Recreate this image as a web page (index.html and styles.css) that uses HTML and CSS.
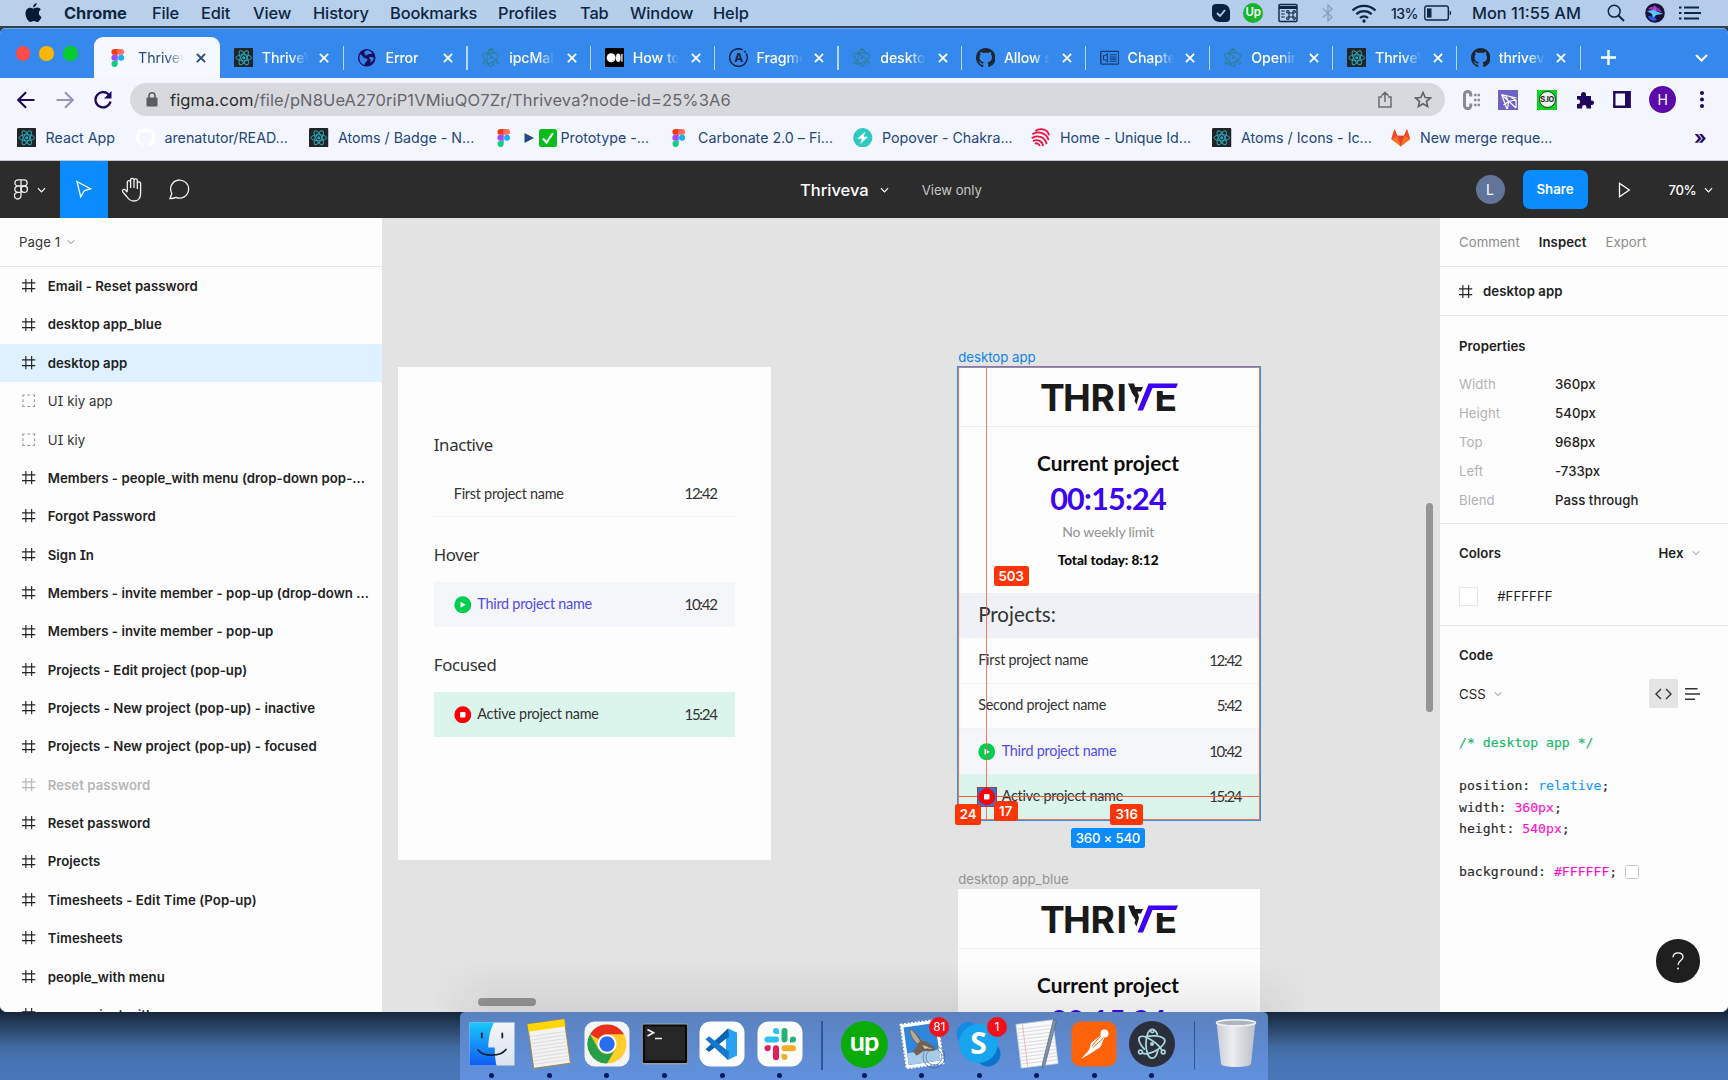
FILE: index.html
```html
<!DOCTYPE html>
<html lang="en">
<head>
<meta charset="utf-8">
<title>Thriveva</title>
<link rel="stylesheet" href="styles.css">
</head>
<body>
<svg class="sprite" aria-hidden="true">
  <symbol id="react" viewBox="0 0 20 20"><rect width="20" height="20" rx="1.5" fill="#222426"/><g fill="none" stroke="#27a9bd" stroke-width="1"><ellipse cx="10" cy="10" rx="8" ry="3.1"/><ellipse cx="10" cy="10" rx="8" ry="3.1" transform="rotate(60 10 10)"/><ellipse cx="10" cy="10" rx="8" ry="3.1" transform="rotate(120 10 10)"/></g><circle cx="10" cy="10" r="1.6" fill="#27a9bd"/></symbol>
  <symbol id="figma" viewBox="0 0 20 20"><path d="M6.5 1H10v6H6.5a3 3 0 0 1 0-6z" fill="#f63c0a"/><path d="M10 1h3.5a3 3 0 0 1 0 6H10z" fill="#ff6d60"/><path d="M6.5 7H10v6H6.5a3 3 0 0 1 0-6z" fill="#9c4bff"/><circle cx="13.4" cy="10" r="3.1" fill="#12b2f8"/><path d="M6.5 13H10v3.2A3.2 3.2 0 1 1 6.5 13z" fill="#10cf82"/></symbol>
  <symbol id="electron" viewBox="0 0 20 20"><g fill="none" stroke="currentColor" stroke-width="1.1" stroke-linecap="round"><path d="M5.2 13.2C2 9.8.9 6.500 2.500 5.500c1.300-.8 4.300.2 7.300 2.100 3.100 2 5.500 4.400 6.400 6.500"/><path d="M6.300 5.400c4.200-.9 9-.6 11 1.100 1.900 1.700-.2 4.700-3.900 7.100-3.700 2.300-7.800 3.200-9.300 2"/><path d="M13.300 4c-.7-2-1.900-3.100-3.200-3.100C7.800.9 6.200 5 6.200 10c0 5 1.700 8.900 3.900 8.900 1.500 0 2.800-1.800 3.500-4.600"/></g><g fill="none" stroke="currentColor"><circle cx="2.800" cy="15" r="1.200"/><circle cx="17" cy="15" r="1.200"/><circle cx="10.200" cy="1.900" r="1"/></g><circle cx="10" cy="10" r="1.200" fill="currentColor"/></symbol>
  <symbol id="github" viewBox="0 0 16 16"><path fill="currentColor" d="M8 0C3.58 0 0 3.58 0 8c0 3.540 2.290 6.530 5.470 7.590.4.070.55-.17.55-.38 0-.19-.01-.82-.01-1.490-2.010.37-2.530-.49-2.690-.94-.09-.23-.48-.94-.82-1.130-.28-.15-.68-.52-.01-.53.63-.01 1.080.58 1.230.82.72 1.210 1.870.87 2.330.66.070-.52.28-.87.51-1.070-1.780-.2-3.640-.89-3.640-3.950 0-.87.31-1.590.82-2.150-.08-.2-.36-1.020.08-2.120 0 0 .67-.21 2.200.82.640-.18 1.320-.27 2-.27s1.360.09 2 .27c1.530-1.040 2.200-.82 2.200-.82.440 1.100.16 1.920.08 2.120.51.560.82 1.270.82 2.150 0 3.070-1.870 3.750-3.650 3.950.29.250.54.730.54 1.480 0 1.070-.01 1.930-.01 2.200 0 .21.15.460.55.38A8.010 8.010 0 0 0 16 8c0-4.420-3.580-8-8-8z"/></symbol>
  <symbol id="globe" viewBox="0 0 20 20"><circle cx="10" cy="10" r="9" fill="#1c0d5c"/><path d="M3 6.500C6 7.500 6 10 8.500 10.500s3 1.500 1.500 3-2.500 3-2.500 4C4 16.500 2.500 13 2.500 10zM8.500 3c2.500-1.500 5 0 7 2-1 2-2.500.5-4 1.500S9 8.500 8.500 7s-2-2.500 0-4zM12.500 9.500c1.500-.5 4-.5 4.800.5-.3 2.500-1.800 4-3.300 5-.5-1.500.5-2.500-.5-3.500s-1.500-1.500-1-2z" fill="#2f83ea"/></symbol>
  <symbol id="medium" viewBox="0 0 20 20"><rect width="20" height="20" rx="1.500"/><circle cx="6.300" cy="10" r="4.600" fill="#fff"/><ellipse cx="13.600" cy="10" rx="2.400" ry="4.400" fill="#fff"/><rect x="16.700" y="6" width="1.300" height="8" fill="#fff"/></symbol>
  <symbol id="apollo" viewBox="0 0 20 20"><path d="M17.600 5.500A9 9 0 1 1 14 1.900" fill="none" stroke="#16223d" stroke-width="1.500"/><circle cx="16.300" cy="3.800" r="1" fill="#16223d"/><text x="10" y="14.500" text-anchor="middle" font-family="Inter, sans-serif" font-weight="700" font-size="12.500" fill="#16223d">A</text></symbol>
  <symbol id="chapter" viewBox="0 0 20 20"><rect x=".8" y="3.500" width="18.400" height="13" rx="1" fill="none" stroke="#123a78" stroke-width="1.400"/><path d="M3.500 8v4h1.500l2.500 2V6L5 8zM10 7h7M10 9.200h7M10 11.400h7M10 13.600h7" fill="none" stroke="#123a78" stroke-width="1.100"/></symbol>
  <symbol id="close" viewBox="0 0 10 10"><path d="M.9.900l8.200 8.200M9.100.900L.9 9.100" fill="none" stroke="currentColor" stroke-width="1.900"/></symbol>
  <symbol id="chev" viewBox="0 0 10 6"><path d="M1 1l4 4 4-4" fill="none" stroke="currentColor" stroke-width="1.300"/></symbol>
  <symbol id="frame" viewBox="0 0 14 14"><path d="M4 0v14M10 0v14M0 4h14M0 10h14" fill="none" stroke="currentColor" stroke-width="1.200"/></symbol>
  <symbol id="group" viewBox="0 0 14 14"><path d="M1 3V1h2M5.500 1h3M11 1h2v2M13 5.500v3M13 11v2h-2M8.500 13h-3M3 13H1v-2M1 8.500v-3" fill="none" stroke="#9a9a9a" stroke-width="1.200"/></symbol>
  <symbol id="play" viewBox="0 0 18 18"><circle cx="9" cy="9" r="8.700" fill="#00ce51"/><path d="M6.700 5.800l5.500 3.200-5.500 3.200z" fill="#fff"/></symbol>
  <symbol id="stop" viewBox="0 0 18 18"><circle cx="9" cy="9" r="8.700" fill="#fb0207"/><rect x="6.200" y="6.200" width="5.600" height="5.600" rx=".8" fill="#fff"/></symbol>
  <symbol id="thrive" viewBox="0 0 137 28">
    <g font-family="Inter, sans-serif" font-weight="700" font-size="37.200" fill="#1a1a1a"><text x="-1" y="27.500">T</text><text x="22" y="27.500">H</text><text x="49.500" y="27.500">R</text><text x="75.500" y="27.500">I</text><text x="113.500" y="27.500">E</text></g>
    <path d="M106 -2h31v10.500h-31z" fill="#fdfdfd"/>
    <path d="M87 .5h6l1 3.500h8l-2 4.500h-3.500l1.500 4.500-2.500 8.500-2-3.500 1-3-3.500-5z" fill="#1a1a1a"/>
    <path d="M107.500.5h29.500L135 5h-23.500L102 27.500h-5.500z" fill="#3d00f5"/>
    <path d="M116.200 8h5.300v4.500h-5.300z" fill="#1a1a1a"/>
  </symbol>
</svg>

<header class="menubar">
  <nav class="menus">
    <span class="apple"><svg width="17" height="20" viewBox="0 0 17 20"><path d="M11.600 0c.2 1.900-1.500 4.300-3.500 4.300C7.900 2.400 9.700.3 11.600 0zM8.600 5.600c.8 0 1.900-1 3.600-1 1.500 0 2.900.8 3.700 2-3 1.800-2.600 6 .6 7.300-.8 2.200-2.500 5-4.200 5-1.300 0-1.800-.9-3.400-.9s-2.200.9-3.400.9C3.300 18.900.5 14.400.5 10.500c0-3.700 2.300-5.800 4.700-5.800 1.500 0 2.600.9 3.400.9z" fill="#041a35"/></svg></span>
    <b>Chrome</b><span>File</span><span>Edit</span><span>View</span><span>History</span><span>Bookmarks</span><span>Profiles</span><span>Tab</span><span>Window</span><span>Help</span>
  </nav>
  <div class="status">
    <svg width="20" height="20" viewBox="0 0 20 20"><path d="M5 1h7a8 8 0 0 1 7 7v7a4 4 0 0 1-4 4H8a8 8 0 0 1-7-7V5a4 4 0 0 1 4-4z" fill="#08213e"/><path d="M6 10l3 3 5-6" fill="none" stroke="#b5ceea" stroke-width="1.800"/></svg>
    <span class="up">Up</span>
    <svg width="20" height="20" viewBox="0 0 20 20"><rect x="1" y="1.500" width="18" height="17" rx="1" fill="none" stroke="#0b2746" stroke-width="1.400"/><path d="M1 4.500h18" stroke="#0b2746" stroke-width="3"/><path d="M3.500 8h3M3.500 11h3M3.500 14h3" stroke="#0b2746" stroke-width="1.500" stroke-dasharray="1.300 .6"/><path d="M11 10h4v4h-4zM11 10H9.800A1.200 1.200 0 1 1 11 8.800zM15 10V8.800A1.200 1.200 0 1 1 16.200 10zM15 14h1.200A1.200 1.200 0 1 1 15 15.200zM11 14v1.200A1.200 1.200 0 1 1 9.800 14z" fill="none" stroke="#0b2746" stroke-width="1.100"/></svg>
    <svg class="bt" width="12" height="20" viewBox="0 0 12 20"><path d="M1 5.500l9 8.500-4 4V2l4 4-9 8.500" fill="none" stroke="#86a3c5" stroke-width="1.400"/></svg>
    <svg class="wifi" width="26" height="19" viewBox="0 0 26 19"><g fill="none" stroke="#0b2746" stroke-width="2.300"><path d="M1.500 6.500a16.500 16.500 0 0 1 23 0M5.300 10.300a11 11 0 0 1 15.400 0M9 14a6 6 0 0 1 8 0"/></g><circle cx="13" cy="17" r="1.700" fill="#0b2746"/></svg>
    <span class="pct">13%</span>
    <svg class="batt" width="28" height="16" viewBox="0 0 28 16"><rect x=".8" y="1" width="23.500" height="14" rx="2" fill="none" stroke="#0b2746" stroke-width="1.400"/><rect x="3" y="3.400" width="4.500" height="9.200" fill="#0b2746"/><path d="M25.600 5.500c2 .7 2 4.300 0 5z" fill="#0b2746"/></svg>
    <span class="clock">Mon 11:55 AM</span>
    <svg class="find" width="18" height="18" viewBox="0 0 18 18"><circle cx="7.200" cy="7.200" r="5.900" fill="none" stroke="#0b2746" stroke-width="1.500"/><path d="M11.500 11.500l5.500 5.500" stroke="#0b2746" stroke-width="2"/></svg>
    <svg class="siri" width="20" height="20" viewBox="0 0 20 20"><circle cx="10" cy="10" r="9.800" fill="#171239"/><path d="M10 2l1 6 7 3-7 1-3 4-1-5-5-3 6-1z" fill="#53c9f5"/><path d="M3 6c5-5 12-2 14 4-4-3-9-2-14-4z" fill="#c233d8" opacity=".8"/><path d="M3 13c4 0 7 1 9 4-4 2-8 0-9-4z" fill="#3157e8"/></svg>
    <svg width="22" height="14" viewBox="0 0 22 14"><path d="M5 1.500h15M5 7h17M5 12.500h15M0 1.500h2.500M0 7h2.500M0 12.500h2.500" stroke="#0b2746" stroke-width="2.200"/></svg>
  </div>
</header>

<main class="window">
  <div class="tabstrip">
    <div class="lights"><i class="red"></i><i class="amber"></i><i class="green"></i></div>
    <div class="tabs">
      <div class="tab active"><svg class="fav"><use href="#figma"/></svg><span>Thriveva</span><svg class="x"><use href="#close"/></svg></div>
      <div class="tab"><svg class="fav"><use href="#react"/></svg><span>ThriveVa</span><svg class="x"><use href="#close"/></svg></div>
      <div class="tab"><svg class="fav"><use href="#globe"/></svg><span>Error</span><svg class="x"><use href="#close"/></svg></div>
      <div class="tab"><svg class="fav teal"><use href="#electron"/></svg><span>ipcMain</span><svg class="x"><use href="#close"/></svg></div>
      <div class="tab"><svg class="fav"><use href="#medium"/></svg><span>How to c</span><svg class="x"><use href="#close"/></svg></div>
      <div class="tab"><svg class="fav"><use href="#apollo"/></svg><span>Fragments</span><svg class="x"><use href="#close"/></svg></div>
      <div class="tab"><svg class="fav teal"><use href="#electron"/></svg><span>desktopC</span><svg class="x"><use href="#close"/></svg></div>
      <div class="tab"><svg class="fav dark"><use href="#github"/></svg><span>Allow se</span><svg class="x"><use href="#close"/></svg></div>
      <div class="tab"><svg class="fav"><use href="#chapter"/></svg><span>Chapter</span><svg class="x"><use href="#close"/></svg></div>
      <div class="tab"><svg class="fav teal"><use href="#electron"/></svg><span>Opening</span><svg class="x"><use href="#close"/></svg></div>
      <div class="tab"><svg class="fav"><use href="#react"/></svg><span>ThriveVa</span><svg class="x"><use href="#close"/></svg></div>
      <div class="tab"><svg class="fav dark"><use href="#github"/></svg><span>thriveva</span><svg class="x"><use href="#close"/></svg></div>
    </div>
    <svg class="newtab" width="15" height="15" viewBox="0 0 15 15"><path d="M7.500 0v15M0 7.500h15" stroke="#fff" stroke-width="2.400"/></svg>
    <svg class="tabmenu" width="13" height="8" viewBox="0 0 13 8"><path d="M1 1l5.500 5.500L12 1" fill="none" stroke="#fff" stroke-width="2"/></svg>
  </div>

  <div class="toolbar">
    <svg width="18" height="18" viewBox="0 0 18 18"><path d="M17.500 9H1.800M9 1.200L1.200 9 9 16.800" fill="none" stroke="#21085c" stroke-width="2.200"/></svg>
    <svg width="18" height="18" viewBox="0 0 18 18"><path d="M.5 9h15.700M9 1.200L16.800 9 9 16.800" fill="none" stroke="#9c92bb" stroke-width="2.200"/></svg>
    <svg width="18" height="18" viewBox="0 0 18 18"><path d="M15.300 4.300A7.600 7.600 0 1 0 16.500 10.500" fill="none" stroke="#21085c" stroke-width="2.300"/><path d="M17.500 0v7.500H10z" fill="#21085c"/></svg>
    <div class="address">
      <svg width="12" height="15" viewBox="0 0 12 15"><rect x=".5" y="5.500" width="11" height="9" rx="1" fill="#5a5c61"/><path d="M3 6V3.800a3 3 0 0 1 6 0V6" fill="none" stroke="#5a5c61" stroke-width="1.600"/></svg>
      <span class="url"><em>figma.com</em>/file/pN8UeA270riP1VMiuQO7Zr/Thriveva?node-id=25%3A6</span>
      <svg width="14" height="17" viewBox="0 0 14 17"><path d="M4 6H1v10h12V6h-3M7 11V1.500M3.500 4.800L7 1.300l3.500 3.500" fill="none" stroke="#6a6b70" stroke-width="1.500"/></svg>
      <svg width="18" height="17" viewBox="0 0 18 17"><path d="M9 1.500l2.200 5 5.300.4-4 3.500 1.200 5.200L9 12.800l-4.700 2.800 1.200-5.200-4-3.500 5.300-.4z" fill="none" stroke="#5f6066" stroke-width="1.600"/></svg>
    </div>
    <div class="exts">
      <svg width="18" height="20" viewBox="0 0 18 20"><path d="M8.800 6.500V4.600a3 3 0 0 0-6.300 0v10.800a3 3 0 0 0 6.300 0v-1.900" fill="none" stroke="#8b8b8d" stroke-width="3"/><path d="M12 5h2.500M15.500 5H18M12 10h2.500M15.500 10H18M12 15h2.500M15.500 15H18" stroke="#8f8f91" stroke-width="2.500"/></svg>
      <svg width="20" height="20" viewBox="0 0 20 20"><rect width="20" height="20" fill="#6c63c4"/><path d="M3.500 4.500l15 3.500M3.500 4.500L18 18M3.500 4.500L9 19M8 6.200L10.500 11.500M12.500 7l5 3-7 1.500L5.500 15M18 10v8M10.500 11.500l-1 7.500" fill="none" stroke="#fff" stroke-width="1.200"/></svg>
      <span class="sio"><b>S.IO</b></span>
      <svg width="18" height="18" viewBox="0 0 18 18"><path d="M1 5h4V3.500a2.500 2.500 0 0 1 5 0V5h5v4.500h.8a2.200 2.200 0 0 1 0 4.400H15V17.500h-4.500v-1.300a2.200 2.200 0 0 0-4.400 0v1.300H1V13h1a2.200 2.200 0 0 0 0-4.400H1z" fill="#21085c"/></svg>
      <svg width="18" height="17" viewBox="0 0 18 17"><path d="M1.300 1.300h15.400v14.400H1.300z" fill="none" stroke="#21085c" stroke-width="2.400"/><path d="M12 1h5v15h-5z" fill="#21085c"/></svg>
      <span class="profile">H</span>
      <svg width="4" height="17" viewBox="0 0 4 17"><g fill="#21085c"><circle cx="2" cy="2" r="2"/><circle cx="2" cy="8.500" r="2"/><circle cx="2" cy="15" r="2"/></g></svg>
    </div>
  </div>

  <div class="bookmarks">
    <span><svg class="fav"><use href="#react"/></svg>React App</span>
    <span><svg class="fav white"><use href="#github"/></svg>arenatutor/READ...</span>
    <span><svg class="fav"><use href="#react"/></svg>Atoms / Badge - N...</span>
    <span class="proto"><svg class="fav"><use href="#figma"/></svg><svg class="tri" width="10" height="10" viewBox="0 0 10 10"><path d="M.5 0L10 5 .5 10z" fill="#24487b"/></svg><svg class="check" width="18" height="18" viewBox="0 0 18 18"><rect width="18" height="18" rx="2.500" fill="#09bd1d"/><path d="M4 9.500l3.500 4L14 4" fill="none" stroke="#fff" stroke-width="2"/></svg>Prototype -...</span>
    <span><svg class="fav"><use href="#figma"/></svg>Carbonate 2.0 – Fi...</span>
    <span><svg class="fav" viewBox="0 0 20 20"><circle cx="10" cy="10" r="9.900" fill="#2ec9c1"/><path d="M12.500 3.500L4.500 11h4.500l-1.500 5.500L15.500 9H11z" fill="#fff"/></svg>Popover - Chakra...</span>
    <span><svg class="fav" viewBox="0 0 20 20"><g fill="none" stroke="#ec1440" stroke-width="1.900"><path d="M4.500 3C9-.5 17 1 18.500 7.500M1.500 6.500C7 2.500 16.500 5 18 12.500M.8 10.500C6 6.500 14.500 9 16 16.500M2 13.500c4-2.500 9.500-.5 10.500 5M4 16c2-1 4.500.5 5 2.500"/></g></svg>Home - Unique Id...</span>
    <span><svg class="fav"><use href="#react"/></svg>Atoms / Icons - Ic...</span>
    <span><svg class="fav" viewBox="0 0 20 20"><path d="M10 19L.3 11.500 3.600 1l3 7h6.800l3-7 3.300 10.500z" fill="#fc6d26"/><path d="M10 19L6.600 8h6.800z" fill="#e2432a"/><path d="M.3 11.500L3.600 1l3 7zM19.700 11.500L16.400 1l-3 7z" fill="#ee4a27"/></svg>New merge reque...</span>
    <b>»</b>
  </div>

  <div class="figbar">
    <div class="tool logo"><svg width="14" height="21" viewBox="0 0 14 21"><g fill="none" stroke="#f0f0f0" stroke-width="1.300"><path d="M7 .8H4a3 3 0 0 0 0 6.200h3zM7 .8h3a3 3 0 0 1 0 6.200H7zM7 7H4a3.200 3.200 0 0 0 0 6.400h3zM4 13.400a3.300 3.300 0 1 0 3 3.300V13.400z"/><circle cx="10.200" cy="10.200" r="3.200"/></g></svg><svg class="chev"><use href="#chev"/></svg></div>
    <div class="tool on"><svg width="18" height="19" viewBox="0 0 18 19"><path d="M2 1.500l13.500 7.300-6 1.700-3.800 6.300z" fill="none" stroke="#fff" stroke-width="1.300"/></svg></div>
    <div class="tool"><svg width="23" height="25" viewBox="0 0 23 25"><path d="M6.300 14.500V5.300a1.600 1.600 0 0 1 3.300 0V11M9.600 11V3a1.600 1.600 0 0 1 3.400 0v8M13 11V3.600a1.600 1.600 0 0 1 3.300 0V12M16.300 12V6.600a1.600 1.600 0 0 1 3.300 0V16c0 5-2.500 8-6.600 8-3.700 0-5.500-1.600-7.300-4.500L1.700 14.800c-1-2 1.500-3.200 2.800-1.600l1.800 2" fill="none" stroke="#f3f3f3" stroke-width="1.300"/></svg></div>
    <div class="tool"><svg width="22" height="21" viewBox="0 0 22 21"><path d="M1 19.500l1.800-5A9 9 0 1 1 7 18.300c-1.800.9-3.800 1.200-6 1.200z" fill="none" stroke="#f3f3f3" stroke-width="1.300"/></svg></div>
    <div class="doc"><strong>Thriveva</strong><svg class="chev"><use href="#chev"/></svg><span>View only</span></div>
    <div class="acts"><span class="avatar">L</span><span class="share">Share</span><svg width="13" height="16" viewBox="0 0 13 16"><path d="M1.500 1.300L11.300 8l-9.800 6.700z" fill="none" stroke="#fff" stroke-width="1.300"/></svg><span class="zoomlvl">70%</span><svg class="chev"><use href="#chev"/></svg></div>
  </div>

  <div class="work">
    <aside class="layers">
      <div class="page">Page 1<svg class="chev"><use href="#chev"/></svg></div>
      <ul>
        <li><svg><use href="#frame"/></svg><span>Email - Reset password</span></li>
        <li><svg><use href="#frame"/></svg><span>desktop app_blue</span></li>
        <li class="sel"><svg><use href="#frame"/></svg><span>desktop app</span></li>
        <li class="thin"><svg><use href="#group"/></svg><span>UI kiy app</span></li>
        <li class="thin"><svg><use href="#group"/></svg><span>UI kiy</span></li>
        <li><svg><use href="#frame"/></svg><span>Members - people_with menu (drop-down pop-...</span></li>
        <li><svg><use href="#frame"/></svg><span>Forgot Password</span></li>
        <li><svg><use href="#frame"/></svg><span>Sign In</span></li>
        <li><svg><use href="#frame"/></svg><span>Members - invite member - pop-up (drop-down ...</span></li>
        <li><svg><use href="#frame"/></svg><span>Members - invite member - pop-up</span></li>
        <li><svg><use href="#frame"/></svg><span>Projects - Edit project (pop-up)</span></li>
        <li><svg><use href="#frame"/></svg><span>Projects - New project (pop-up) - inactive</span></li>
        <li><svg><use href="#frame"/></svg><span>Projects - New project (pop-up) - focused</span></li>
        <li class="off"><svg><use href="#frame"/></svg><span>Reset password</span></li>
        <li><svg><use href="#frame"/></svg><span>Reset password</span></li>
        <li><svg><use href="#frame"/></svg><span>Projects</span></li>
        <li><svg><use href="#frame"/></svg><span>Timesheets - Edit Time (Pop-up)</span></li>
        <li><svg><use href="#frame"/></svg><span>Timesheets</span></li>
        <li><svg><use href="#frame"/></svg><span>people_with menu</span></li>
        <li><svg><use href="#frame"/></svg><span>new project with</span></li>
      </ul>
    </aside>

    <section class="canvas">
      <div class="board kit">
        <h3>Inactive</h3>
        <div class="prow"><span>First project name</span><time>12:42</time></div>
        <h3>Hover</h3>
        <div class="prow hover"><svg><use href="#play"/></svg><span>Third project name</span><time>10:42</time></div>
        <h3>Focused</h3>
        <div class="prow live"><svg><use href="#stop"/></svg><span>Active project name</span><time>15:24</time></div>
      </div>

      <div class="label one">desktop app</div>
      <div class="board app first">
        <div class="brand"><svg width="137" height="28"><use href="#thrive"/></svg></div>
        <div class="current"><h2>Current project</h2><p class="timer">00:15:24</p><p class="limit">No weekly limit</p><p class="total">Total today: 8:12</p></div>
        <div class="phead">Projects:</div>
        <div class="prow"><span>First project name</span><time>12:42</time></div>
        <div class="prow"><span>Second project name</span><time>5:42</time></div>
        <div class="prow hover"><svg><use href="#play"/></svg><span>Third project name</span><time>10:42</time></div>
        <div class="prow live"><svg class="picked"><use href="#stop"/></svg><span>Active project name</span><time>15:24</time></div>
        <i class="guide v"></i><i class="guide h"></i><i class="outline"></i>
        <em class="tag t503">503</em><em class="tag t24">24</em><em class="tag t17">17</em><em class="tag t316">316</em><em class="tag size">360 × 540</em>
      </div>

      <div class="label two">desktop app_blue</div>
      <div class="board app second">
        <div class="brand"><svg width="137" height="28"><use href="#thrive"/></svg></div>
        <div class="current"><h2>Current project</h2><p class="timer">00:15:24</p></div>
      </div>
      <i class="scroll vert"></i><i class="scroll horz"></i>
      <i class="haze"></i>
    </section>

    <aside class="inspect">
      <div class="itabs"><span>Comment</span><b>Inspect</b><span>Export</span></div>
      <div class="iname"><svg><use href="#frame"/></svg><b>desktop app</b></div>
      <div class="props">
        <h4>Properties</h4>
        <dl><dt>Width</dt><dd>360px</dd><dt>Height</dt><dd>540px</dd><dt>Top</dt><dd>968px</dd><dt>Left</dt><dd>-733px</dd><dt>Blend</dt><dd>Pass through</dd></dl>
      </div>
      <div class="colors">
        <div class="line"><h4>Colors</h4><span class="pick"><b>Hex</b><svg class="chev"><use href="#chev"/></svg></span></div>
        <div class="swatch"><i></i>#FFFFFF</div>
      </div>
      <div class="code">
        <h4>Code</h4>
        <div class="line"><span class="pick">CSS<svg class="chev"><use href="#chev"/></svg></span>
          <span class="modes"><span class="mode"><svg width="17" height="12" viewBox="0 0 17 12"><path d="M6 1L1 6l5 5M11 1l5 5-5 5" fill="none" stroke="#333" stroke-width="1.400"/></svg></span><svg width="15" height="12" viewBox="0 0 15 12"><path d="M0 .8h12.500M0 6h15M0 11.200h10" stroke="#333" stroke-width="1.400"/></svg></span></div>
<pre><i>/* desktop app */</i>

position: <u>relative</u>;
width: <s>360px</s>;
height: <s>540px</s>;

background: <s>#FFFFFF</s>; <span class="chip"></span></pre>
      </div>
      <div class="help"><svg width="12" height="18" viewBox="0 0 12 18"><path d="M1 5.300C1 2.600 3 .8 6 .8s5 1.800 5 4.300c0 3.400-5 3.600-5 7.900" fill="none" stroke="#fff" stroke-width="1.300"/><circle cx="6" cy="16.500" r=".9" fill="#fff"/></svg></div>
    </aside>
  </div>
</main>

<footer class="dock">
  <div class="app-icon"><svg viewBox="0 0 46 46"><defs><linearGradient id="fa" x2="0" y2="1"><stop stop-color="#1bc6fb"/><stop offset="1" stop-color="#0f5cf5"/></linearGradient><linearGradient id="fb" x2="0" y2="1"><stop stop-color="#f2f5fa"/><stop offset="1" stop-color="#dbe3ee"/></linearGradient></defs><path d="M.5 1.500h45v43H.5z" fill="url(#fb)"/><path d="M.5 1.500H25C21 9 19.500 17 19.300 26.500h6.500c-.2 6 .4 12 1.700 18H.5z" fill="url(#fa)"/><path d="M9 29c6 7 22 7 28-.5M12.800 12.500v4M33.300 12.500v4" fill="none" stroke="#132233" stroke-width="1.800" stroke-linecap="round"/></svg></div>
  <div class="app-icon"><svg viewBox="0 0 46 52"><g transform="rotate(-8 23 26)"><rect x="4.500" y="3.500" width="37" height="44.500" fill="#f4f3f3" stroke="#a8894a" stroke-width="1"/><path d="M5 16h36M5 19.500h36M5 23h36M5 26.500h36M5 30h36M5 33.500h36M5 37h36M5 40.500h36M5 44h36" stroke="#d8d8da" stroke-width=".8"/><path d="M4.500 3.500h37V11h-37z" fill="#ffd709"/></g></svg></div>
  <div class="app-icon"><svg viewBox="0 0 46 46"><rect x=".5" y=".5" width="45" height="45" rx="10" fill="#f3f4f7"/><circle cx="23" cy="23" r="19.500" fill="#ffce2e"/><path d="M6.100 13.200A19.500 19.500 0 0 1 39.900 13.200H23a9.800 9.800 0 0 0-8.500 4.900z" fill="#ea2e20"/><path d="M6.100 13.200a19.500 19.500 0 0 0 16.900 29.300l8.500-14.600a9.800 9.800 0 0 1-17 0z" fill="#25a048"/><circle cx="23" cy="23" r="9.500" fill="#fff"/><circle cx="23" cy="23" r="7.700" fill="#2a6df2"/></svg></div>
  <div class="app-icon"><svg viewBox="0 0 46 46"><rect x="0" y="2.500" width="46" height="41" rx="2" fill="#9aa0a8"/><rect x=".8" y="3.500" width="44.400" height="38.500" rx="1" fill="#0b0b0c"/><rect x="3" y="5.500" width="40" height="34" fill="#262626"/><path d="M5.500 8.500l6 3.200-6 3.200M13 17.500h7" fill="none" stroke="#eee" stroke-width="1.700"/></svg></div>
  <div class="app-icon"><svg viewBox="0 0 46 46"><rect x=".5" y=".5" width="45" height="45" rx="11" fill="#fdfdfe"/><path d="M29 7.500l9 4v23l-9 4.500-2-2V9.500z" fill="#28a0f3"/><path d="M29 7.500L6.500 28.300l3.500 2.800 20-15.500z" fill="#0b62b0"/><path d="M29 39L6.500 18.200 10 15.300l20 15.500z" fill="#1578cd"/></svg></div>
  <div class="app-icon"><svg viewBox="0 0 46 46"><rect x=".5" y=".5" width="45" height="45" rx="11" fill="#fdfdfe"/><g stroke-width="6" stroke-linecap="round"><path d="M10.500 18.500H19" stroke="#2cc3f2"/><path d="M27.500 10v8.500" stroke="#25b37b"/><path d="M27.500 27.300H36" stroke="#edb02a"/><path d="M19 27.300v9" stroke="#e01f5b"/></g><path d="M22 13v-3a3 3 0 1 0-3 3z" fill="#2cc3f2"/><path d="M33 21.500v-3a3 3 0 1 1 3 3z" fill="#25b37b"/><path d="M24.500 33h3a3 3 0 1 1-3 3z" fill="#edb02a"/><path d="M13.500 24.300v3a3 3 0 1 1-3-3z" fill="#e01f5b"/></svg></div>
  <i class="rule"></i>
  <div class="app-icon"><span class="upwork">up</span></div>
  <div class="app-icon"><svg viewBox="0 0 46 50"><g transform="rotate(-8 23 25)"><rect x="4.500" y="3" width="37" height="44" fill="#fff" stroke="#fff" stroke-width="2" stroke-dasharray="2 1.500"/><rect x="7" y="6" width="32" height="38" fill="#2f86db"/><path d="M7 32h32v12H7z" fill="#a8cbea"/><path d="M13 8c2 0 7 7 10 14 4 0 9 4 13 11-4 1-9 0-12-1l-8 4-3-5 6-5c-4-5-8-13-6-18z" fill="#74604c"/><path d="M13.500 9c3 2 6 8 8 13l-3 2c-3-4-6-10-5-15z" fill="#b9ab98"/><path d="M23 26l10 5-8-1z" fill="#d8ccb4"/></g><g fill="none" stroke="#4a6484" stroke-width=".8" opacity=".8"><circle cx="35" cy="38" r="11"/><circle cx="35" cy="38" r="8"/></g></svg><em>81</em></div>
  <div class="app-icon"><svg viewBox="0 0 46 46"><circle cx="12.500" cy="13" r="12" fill="#1689e0"/><circle cx="32" cy="33" r="12.500" fill="#0a74cc"/><circle cx="22.500" cy="22.500" r="19.500" fill="#16a5ee"/><text x="22.500" y="33" text-anchor="middle" font-family="Open Sans, sans-serif" font-weight="700" font-size="30" fill="#fff">S</text></svg><em>1</em></div>
  <div class="app-icon"><svg viewBox="0 0 46 52"><g transform="rotate(-7 23 26)"><rect x="4.500" y="4" width="37" height="44" fill="#fafafa" stroke="#cfd2d6" stroke-width=".7"/><path d="M5 9h36M5 12.500h36M5 16h36M5 19.500h36M5 23h36M5 26.500h36M5 30h36M5 33.500h36M5 37h36M5 40.500h36M5 44h36" stroke="#cfd4da" stroke-width=".8"/><path d="M11 4v44" stroke="#eeb0ac" stroke-width=".8"/></g><path d="M39.500 1.500l3 1L31 47l-3 3.500.5-5z" fill="#7d94aa" stroke="#51667a" stroke-width=".7"/></svg></div>
  <div class="app-icon"><svg viewBox="0 0 46 46"><rect x=".5" y=".5" width="45" height="45" rx="9" fill="#ff6309"/><circle cx="33.500" cy="12.500" r="4" fill="#fff"/><path d="M30 14l3 3.500-3.500 8.500-7 4.500-3 2-9.500 5.500 8-9 2-7z" fill="#fff"/><path d="M32 17.500l-10 9M29.500 15L21 25" stroke="#ff6309" stroke-width="1"/></svg></div>
  <div class="app-icon"><svg viewBox="0 0 46 46" color="#a9d9dd"><circle cx="23" cy="23" r="23" fill="#2b2e3b"/><use href="#electron" x="7" y="7" width="32" height="32"/></svg></div>
  <i class="rule"></i>
  <div class="app-icon off"><svg viewBox="0 0 46 52"><defs><linearGradient id="tr"><stop stop-color="#c8cdd4"/><stop offset=".4" stop-color="#eceef1"/><stop offset="1" stop-color="#b9bfc9"/></linearGradient></defs><path d="M3.500 4h39L38 46c-.3 4-29.700 4-30 0z" fill="url(#tr)"/><ellipse cx="23" cy="4.800" rx="19.500" ry="3" fill="#aeb5c0" stroke="#f2f3f5" stroke-width="1.500"/></svg></div>
</footer>
</body>
</html>
```
FILE: styles.css
```css
* { box-sizing: border-box; }
body {
  margin: 0; width: 1728px; height: 1080px; overflow: hidden;
  display: flex; flex-direction: column;
  background: linear-gradient(#33404f 0 1006px, #16253a 1011px, #294467 1028px, #40699f 1046px, #4674b5 1062px, #4877b9);
  font-family: Inter, "Liberation Sans", sans-serif;
  font-size: 13.2px; color: #222;
}
svg { display: block; flex: none; }
.sprite { display: none; }
h2, h3, h4, p, ul, dl, dd, pre { margin: 0; padding: 0; }
i, em, u, s { font-style: normal; text-decoration: none; }
.chev { width: 9px; height: 6px; }

/* macOS menu bar */
.menubar {
  height: 26px; flex: none; display: flex; justify-content: space-between; align-items: center;
  background: linear-gradient(90deg, #b9d0ea, #b3ceeb 50%, #b5cdeb);
  font-size: 16.4px; letter-spacing: -.1px; color: #0d2643; font-weight: 450;
}
.menus { display: grid; grid-template-columns: 64px 88px 49px 52px 60px 77px 108px 82px 50px 83px 60px; align-items: center; }
.menus b { font-weight: 700; }
.menus .apple { padding-left: 24.500px; }
.status { display: flex; align-items: center; padding-right: 27px; white-space: nowrap; }
.status .up { width: 20px; height: 20px; margin: 0 15px 0 12px; border-radius: 50%; background: #14b52a; color: #fff; font-size: 11.5px; font-weight: 600; line-height: 19px; text-align: center; letter-spacing: -.3px; }
.bt { margin-left: 24px; }
.wifi { margin-left: 17px; }
.pct { margin-left: 14px; width: 33px; font-size: 14px; letter-spacing: -.6px; }
.clock { margin-left: 20px; width: 135px; letter-spacing: 0; }
.siri { margin: 0 14px 0 20px; }

/* Browser window */
.window {
  height: 984px; flex: none; margin-top: 2px; display: flex; flex-direction: column; position: relative; z-index: 1;
  border-radius: 6px 6px 7px 7px; overflow: hidden; background: #f3f6fe;
}
.tabstrip { height: 50px; flex: none; display: flex; align-items: center; background: #3689ec; border-top: 1px solid #6ca8ee; position: relative; }
.lights { width: 96.500px; padding: 0 0 0 15.500px; display: flex; gap: 9.600px; flex: none; }
.lights i { width: 14.400px; height: 14.400px; border-radius: 50%; }
.red { background: #fc4b48; } .amber { background: #fdb605; } .green { background: #07cc2e; }
.tabs { display: flex; align-self: stretch; }
.tab {
  width: 123.700px; padding: 8px 14.400px 0 13.600px; display: flex; align-items: center; position: relative;
  color: #fff; font-size: 14.200px; font-weight: 500; letter-spacing: -.1px;
}
.tab::after { content: ""; position: absolute; right: 0; top: 17px; width: 1.200px; height: 24px; background: #b9d6f9; }
.tab.active { color: #28487a; font-weight: 400; }
.tab.active::before { content: ""; position: absolute; z-index: 0; left: -2.500px; right: .5px; top: 8px; bottom: 0; border-radius: 9px 9px 0 0; background: #f5f8fe; }
.tab.active::after { display: none; }
.tab.active > * { position: relative; }
.tab.active .fav { left: -2px; }
.fav { width: 19.500px; height: 19.500px; }
.fav.teal { color: #2b7f96; }
.fav.dark { color: #1d2733; }
.fav.white { color: #fdfdfe; }
.tab span { width: 48px; margin: 0 11.500px 0 8.500px; overflow: hidden; white-space: nowrap; line-height: 20px; -webkit-mask-image: linear-gradient(90deg, #000 62%, transparent); mask-image: linear-gradient(90deg, #000 62%, transparent); }
.tab .x { width: 10px; height: 10px; }
.newtab { margin: 8px 0 0 20.500px; }
.tabmenu { margin: 8px 20px 0 auto; }

.toolbar { height: 43px; flex: none; display: flex; align-items: center; padding-left: 17px; }
.toolbar > svg { margin-right: 20.500px; }
.address { width: 1315px; height: 33.600px; margin-left: -3px; padding: 0 12.500px 0 16px; display: flex; align-items: center; border-radius: 17px; background: #d8d9de; color: #65666b; font-size: 16.500px; }
.address .url { margin: 0 auto 0 12.500px; letter-spacing: .12px; }
.url em { color: #2a2b2f; }
.address svg:last-child { margin-left: 22px; }
.exts { flex: 1; display: flex; align-items: center; justify-content: space-between; padding: 0 24px 0 17px; }
.sio { width: 20px; height: 20px; padding: 1.500px; background: #0bd11f; }
.sio b { display: block; width: 17px; height: 17px; border-radius: 50%; background: #e9efe9; border: 1px solid #1a3a1c; font-size: 7.500px; line-height: 15px; text-align: center; color: #222; letter-spacing: -.4px; }
.profile { width: 27px; height: 27px; margin-right: 5px; border-radius: 50%; background: #5a0ba9; color: #fff; text-align: center; line-height: 27px; font-size: 14px; }

.bookmarks {
  height: 39.800px; flex: none; display: grid; align-items: center; padding: 0 0 5.500px 16.500px;
  grid-template-columns: 119px 173.500px 185px 175px 184px 178px 181px 179px 303px 20px;
  border-bottom: 1px solid #c5c8d0; color: #25477a; font-size: 14.250px; letter-spacing: -.01px;
}
.bookmarks span { display: flex; align-items: center; white-space: nowrap; }
.bookmarks .fav { margin-right: 9.500px; }
.bookmarks .proto .fav { margin-right: 10px; }
.bookmarks .check { margin: 0 4px 0 5px; }
.bookmarks b { font-size: 19px; color: #21085c; line-height: 16px; }

/* Editor header */
.figbar { height: 57.600px; flex: none; display: flex; align-items: center; background: #2c2c2c; color: #fff; position: relative; }
.tool { width: 48px; height: 100%; display: flex; align-items: center; justify-content: center; }
.tool.logo { width: 60px; gap: 9px; }
.tool.on { background: #0a8cff; }
.doc { display: flex; align-items: center; margin-left: 596px; }
.doc strong { font-size: 16.500px; font-weight: 500; }
.doc .chev { margin: 0 33px 0 11px; }
.doc span { color: #c4c4c4; letter-spacing: -.05px; }
.acts { margin-left: auto; display: flex; align-items: center; padding-right: 16.500px; }
.avatar { width: 29px; height: 29px; border-radius: 50%; background: #63749b; line-height: 29px; text-align: center; font-size: 14px; }
.share { width: 65px; height: 38.400px; margin: 0 30px 0 18px; border-radius: 7px; background: #0a8cff; line-height: 38px; text-align: center; font-weight: 600; }
.zoomlvl { margin: 0 8px 0 38px; width: 27px; letter-spacing: -.4px; font-weight: 500; white-space: nowrap; }
.acts { padding-right: 15.500px; }

.work { flex: 1; display: flex; min-height: 0; }

/* Layer list */
.layers { width: 381.600px; background: #fdfdfd; overflow: hidden; flex: none; }
.page { height: 49px; padding-left: 19px; display: flex; align-items: center; border-bottom: 1.200px solid #e7e7e7; color: #333; letter-spacing: .07px; }
.page .chev { margin-left: 7px; color: #aaa; width: 8px; }
.layers ul { list-style: none; }
.layers li { height: 38.360px; padding: 0 0 1px 22px; display: flex; align-items: center; font-weight: 600; letter-spacing: .06px; white-space: nowrap; font-feature-settings: "cv08"; }
.layers li svg { width: 13.500px; height: 13.500px; margin-right: 12.200px; }
.layers .sel { background: #dff1fe; }
.layers .thin { font-weight: 400; color: #333; }
.layers .off { color: #b6b6b6; }

/* Canvas */
.canvas { flex: 1; position: relative; overflow: hidden; background: #e3e3e3; }
.board { position: absolute; background: #fdfdfd; font-family: Lato, "Open Sans", sans-serif; }
.kit { left: 16.700px; top: 148.200px; width: 372.500px; height: 493.500px; padding: 66px 35.500px 0 35.500px; }
.kit h3 { font: 400 16.800px/24px "Noto Sans", sans-serif; letter-spacing: -.35px; color: #333; margin-bottom: 15.500px; }
.kit .prow { margin-bottom: 25.200px; height: 45.300px; }
.prow { height: 45.250px; padding: 0 20px; display: flex; align-items: center; border-bottom: 1.200px solid #f2f3f6; font-size: 14.400px; color: #333; }
.prow span, .prow time { padding-bottom: 2px; }
.prow span { letter-spacing: -.25px; }
.prow svg { width: 17.500px; height: 17.500px; margin-right: 6px; }
.prow time { margin-left: auto; letter-spacing: -1.300px; word-spacing: 0; font-size: 15px; padding-right: 0; margin-right: -1.300px; }
.prow.hover { background: #f5f6fa; border: 0; }
.prow.hover span { color: #524bea; }
.prow.live { background: #dbf5ec; border: 0; }
.label { position: absolute; left: 576.600px; line-height: 16px; letter-spacing: 0; }
.label.one { top: 130.500px; color: #0f82ea; }
.label.two { top: 652.500px; color: #939393; }
.app { left: 576.600px; width: 301.800px; height: 453px; }
.first { top: 148.200px; }
.second { top: 670.300px; }
.brand { height: 60px; padding: 16.500px 0 0 83px; border-bottom: 1.200px solid #eceef5; }
.current { height: 166.600px; padding: 22.500px 2px 0 0; text-align: center; color: #0b0b0b; }
.current h2 { font-size: 20.800px; line-height: 27px; font-weight: 700; letter-spacing: .05px; }
.timer { font-size: 30.500px; line-height: 44px; font-weight: 700; color: #3c05ed; letter-spacing: -.75px; }
.limit { font-size: 14px; line-height: 24px; color: #919191; letter-spacing: -.2px; }
.total { font-size: 13.600px; line-height: 32px; font-weight: 900; letter-spacing: -.05px; }
.phead { height: 45.300px; padding-left: 20px; line-height: 42.500px; font-size: 20.500px; background: #f0f1f6; color: #333; }
.picked { outline: 1.500px solid #a53a48; background: #2f7bd8; position: relative; z-index: 1; }
.guide { position: absolute; background: #fb5a3c; }
.guide.v { left: 27.700px; top: 0; width: 1.600px; height: 453px; opacity: .8; }
.guide.h { left: 0; top: 429px; width: 301px; height: 1.600px; }
.outline { position: absolute; inset: 0; border: 1.600px solid #f0715a; outline: 1.400px solid #2f93ef; }
.tag { position: absolute; z-index: 2; height: 20.500px; border-radius: 2.500px; background: #fc3508; color: #fff; font: 600 13.200px/20.500px Inter, sans-serif; text-align: center; white-space: nowrap; }
.t503 { left: 35.500px; top: 199px; width: 35px; }
.t24 { left: -3px; top: 437.500px; width: 26px; }
.t17 { left: 35.500px; top: 434px; width: 24px; }
.t316 { left: 152px; top: 437.500px; width: 33px; }
.tag.size { left: 112.500px; top: 461px; width: 74.500px; background: #0a8cff; font-weight: 500; letter-spacing: -.2px; }
.scroll { position: absolute; background: #959595; border-radius: 4px; }
.vert { left: 1044px; top: 285px; width: 7.500px; height: 209px; }
.horz { left: 96.500px; top: 780px; width: 58px; height: 7.500px; }
.haze { position: absolute; left: 50px; right: 130px; bottom: 0; height: 50px; background: linear-gradient(transparent, rgba(0, 0, 0, .07)); -webkit-mask-image: linear-gradient(90deg, transparent, #000 60px, #000 calc(100% - 60px), transparent); mask-image: linear-gradient(90deg, transparent, #000 60px, #000 calc(100% - 60px), transparent); }

/* Inspect panel */
.inspect { width: 288px; flex: none; background: #fdfdfd; position: relative; letter-spacing: .05px; }
.inspect h4, .inspect b { font-size: 13.200px; font-weight: 600; }
.itabs, .iname { height: 49px; display: flex; align-items: center; padding-left: 19px; border-bottom: 1.200px solid #e7e7e7; }
.itabs span { color: #8c8c8c; }
.itabs b { margin: 0 19px; }
.iname svg { width: 13.500px; height: 13.500px; margin-right: 10.500px; }
.props { height: 207.500px; padding: 19.500px 0 0 19px; border-bottom: 1.200px solid #e7e7e7; }
.props h4, .code h4 { line-height: 20px; }
.props dl { display: grid; grid-template-columns: 96px 1fr; line-height: 28.800px; margin-top: 14.500px; }
.props dt { color: #b2b2b2; }
.props dd { font-weight: 500; color: #222; }
.colors { height: 102px; padding: 19.500px 28.500px 0 19px; border-bottom: 1.200px solid #e7e7e7; }
.line { display: flex; justify-content: space-between; align-items: center; height: 20px; }
.pick { display: flex; align-items: center; gap: 8px; }
.pick .chev { color: #aaa; width: 8px; }
.swatch { display: flex; align-items: center; gap: 19px; margin-top: 23.500px; }
.swatch i { width: 19.200px; height: 19.200px; border: 1.200px solid #e5e5e5; background: #fff; }
.code { padding: 19.500px 28.500px 0 19px; }
.code .line { height: 29px; margin-top: 14px; }
.modes { display: flex; align-items: center; gap: 6.500px; }
.mode { width: 29px; height: 29px; border-radius: 2px; background: #e4e4e4; display: grid; place-items: center; }
pre { margin-top: 23.500px; font: 13.150px/21.550px "DejaVu Sans Mono", monospace; letter-spacing: 0; color: #2a2a2a; -webkit-text-stroke: .15px; }
pre i { color: #14b866; } pre u { color: #129bff; } pre s { color: #fb12cd; }
.chip { display: inline-block; width: 14px; height: 14px; border: 1.200px solid #ccc; border-radius: 1.500px; vertical-align: -3px; background: #fff; }
.help { position: absolute; right: 28.500px; bottom: 29.500px; width: 43.200px; height: 43.200px; border-radius: 50%; background: #1f1f1f; display: grid; place-items: center; }

/* Dock */
.dock {
  flex: 1; width: 808px; margin: 0 auto; padding: 0 3px; display: flex; position: relative;
  background: linear-gradient(#5b82bf, #6191de); border-radius: 5px 5px 0 0; z-index: 2;
}
.app-icon { width: 57.600px; height: 64px; display: flex; align-items: center; justify-content: center; position: relative; }
.app-icon > svg { width: 46px; max-height: 52px; }
.app-icon::after { content: ""; position: absolute; left: 26.300px; top: 60.500px; width: 5px; height: 5px; border-radius: 50%; background: #06195f; }
.app-icon.off::after { display: none; }
.app-icon em { position: absolute; left: 36.500px; top: 5px; width: 20px; height: 20px; border-radius: 50%; background: #f2101a; color: #fff; font-size: 12px; line-height: 20px; text-align: center; }
.rule { width: 1.200px; height: 49px; margin: 9px 12.600px 0 13px; background: #2b56a0; }
.upwork { width: 47px; height: 47px; border-radius: 50%; background: #0cab0c; color: #fff; font: 700 27px/40px Lato, sans-serif; letter-spacing: -1px; text-align: center; }
```
